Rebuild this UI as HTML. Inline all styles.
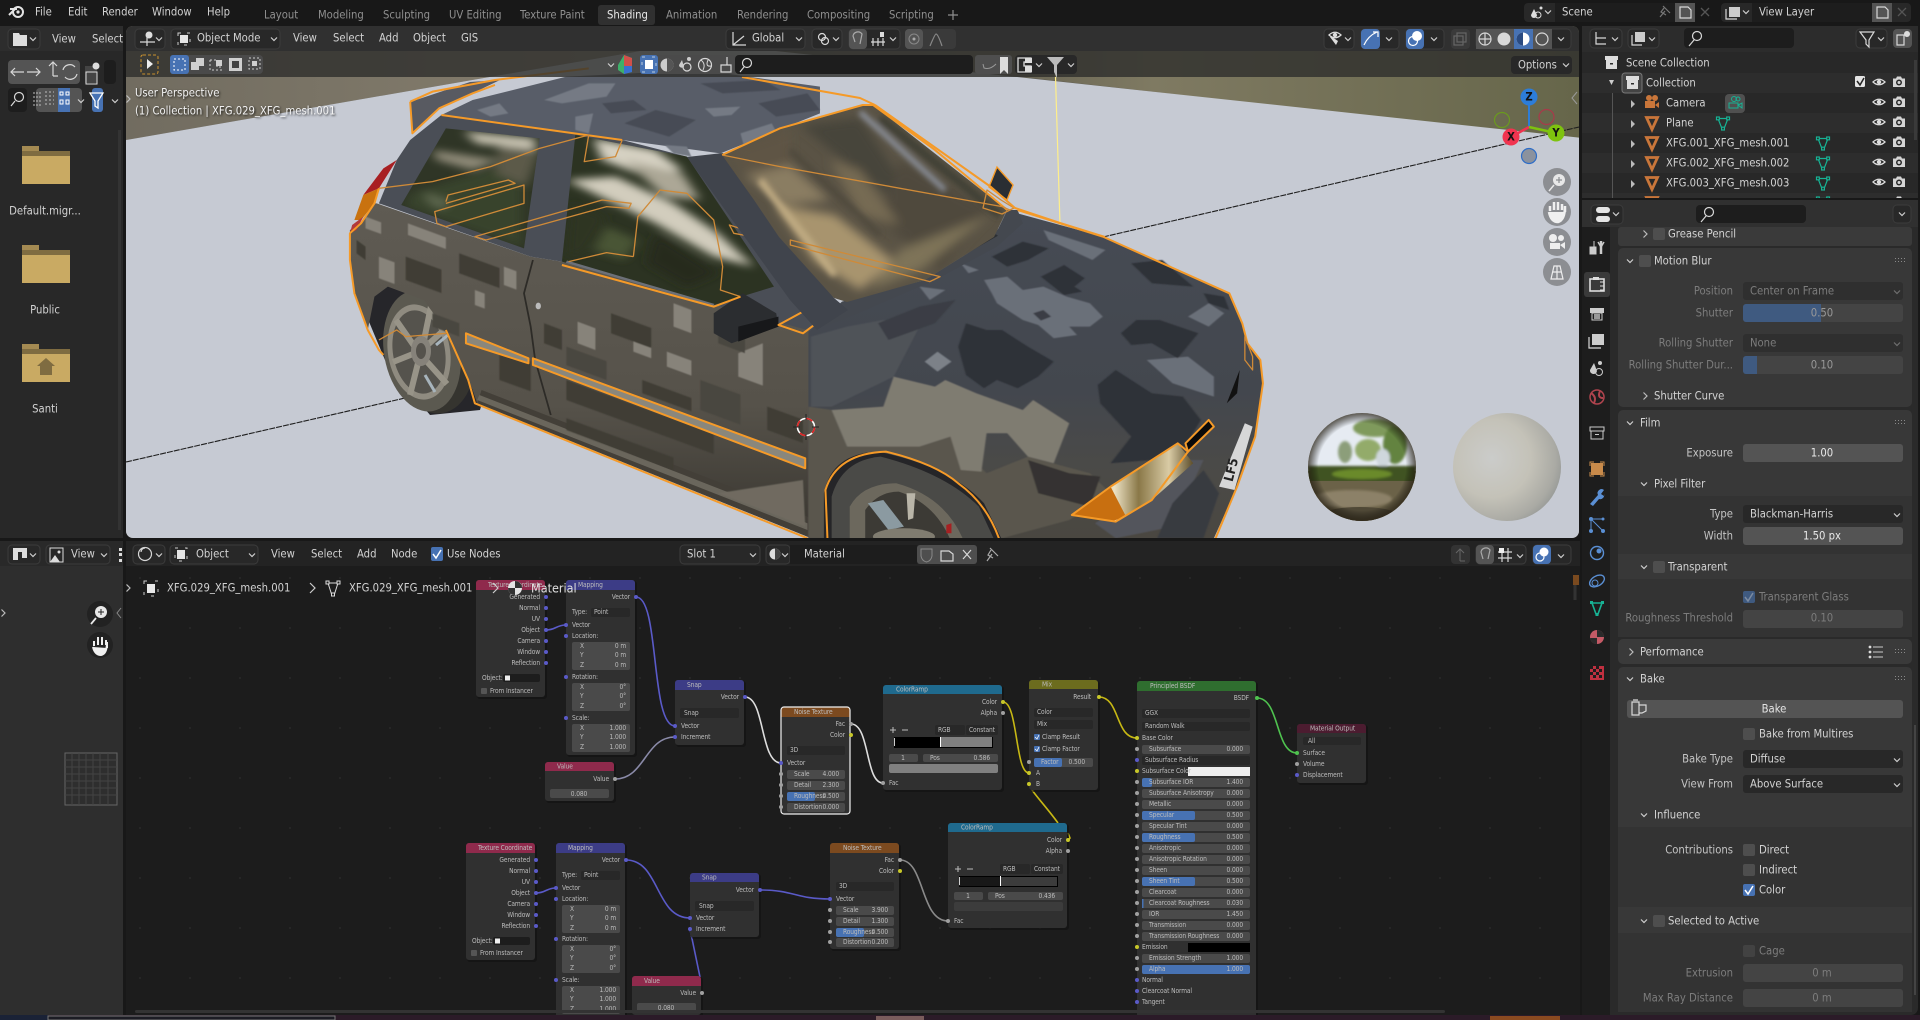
<!DOCTYPE html>
<html><head><meta charset="utf-8"><title>Blender</title>
<style>
html,body{margin:0;padding:0;background:#181818;width:1920px;height:1020px;overflow:hidden}
svg{display:block;position:absolute;left:0;top:0}
text{font-family:"DejaVu Sans Condensed","DejaVu Sans","Liberation Sans",sans-serif;font-stretch:condensed;font-size:11.2px;fill:#d2d2d2;dominant-baseline:central}
.r{text-anchor:end}.m{text-anchor:middle}
.d{fill:#7c7c7c}.l{fill:#c4c4c4}.t{fill:#8f8f8f}
.n text,text.n{font-size:6.6px;fill:#bcbcbc;letter-spacing:-.1px}
.ch{fill:none;stroke:#cfcfcf;stroke-width:1.2}
.b{fill:#282828;stroke:#3c3c3c}
.f{fill:#4a4a4a}.dd{fill:#282828}
.i{fill:none;stroke:#d8d8d8;stroke-width:1.2}
.o{fill:none;stroke:#f59a28;stroke-width:2;vector-effect:non-scaling-stroke;stroke-linejoin:round}
.o1{fill:none;stroke:#cf8a38;stroke-width:1.3;vector-effect:non-scaling-stroke;stroke-linejoin:round}
.lk{fill:none;stroke-width:1.6}
.sh{filter:drop-shadow(1px 1px 1px rgba(0,0,0,.8))}
</style></head><body>
<svg width="1920" height="1020" viewBox="0 0 1920 1020" xmlns="http://www.w3.org/2000/svg">
<defs>
<clipPath id="vp"><rect x="126" y="26" width="1453" height="512" rx="7"/></clipPath>
<clipPath id="ne"><rect x="126" y="541" width="1454" height="474"/></clipPath>
<clipPath id="ol"><rect x="1582" y="26" width="336" height="172"/></clipPath>
<clipPath id="fw"><rect x="0" y="26" width="123" height="40"/></clipPath>
<clipPath id="ws"><polygon points="722,155 780,128 863,105 873,105 1007,210 994,237 925,280 847,302 834,298 779,237 754,200"/></clipPath>
<clipPath id="hs"><circle cx="1362" cy="467" r="54"/></clipPath>
<clipPath id="w1"><polygon points="730,205 940,235 905,565 630,435"/></clipPath>
<clipPath id="w2"><polygon points="1020,225 1270,290 1465,680 1330,735 990,605"/></clipPath>
<filter id="sf" x="-5%" y="-5%" width="110%" height="110%"><feGaussianBlur stdDeviation="1.4"/></filter>
<filter id="bl12" x="-30%" y="-30%" width="160%" height="160%"><feGaussianBlur stdDeviation="12"/></filter>
<filter id="bl5" x="-30%" y="-30%" width="160%" height="160%"><feGaussianBlur stdDeviation="5"/></filter>
<filter id="bl3" x="-30%" y="-30%" width="160%" height="160%"><feGaussianBlur stdDeviation="3"/></filter>
<filter id="bl1" x="-30%" y="-30%" width="160%" height="160%"><feGaussianBlur stdDeviation="1.2"/></filter>
<linearGradient id="gw" x1="0" x2="1" y1="0" y2="0"><stop offset="0" stop-color="#5d5a50"/><stop offset=".37" stop-color="#6a6655"/><stop offset=".52" stop-color="#7f7a62"/><stop offset="1" stop-color="#66664a"/></linearGradient>
<linearGradient id="gl" x1="0" x2="1" y1="0" y2="0"><stop offset="0" stop-color="#716c60"/><stop offset="1" stop-color="#8a8270"/></linearGradient>
<linearGradient id="door" x1="0" x2="0" y1="0" y2="1"><stop offset="0" stop-color="#5f5b53"/><stop offset=".6" stop-color="#56524a"/><stop offset="1" stop-color="#38352f"/></linearGradient>
<linearGradient id="hood" x1="0" x2="0" y1="0" y2="1"><stop offset="0" stop-color="#464b54"/><stop offset=".55" stop-color="#43474e"/><stop offset=".8" stop-color="#4b4a47"/><stop offset="1" stop-color="#4a4741"/></linearGradient>
<linearGradient id="hl" x1="0" x2="1" y1="0" y2="0"><stop offset="0" stop-color="#a58c56"/><stop offset=".35" stop-color="#ece2c4"/><stop offset=".55" stop-color="#8a7848"/><stop offset=".8" stop-color="#d9cba5"/><stop offset="1" stop-color="#5c4d2a"/></linearGradient>
<radialGradient id="ms" cx=".36" cy=".42" r=".72"><stop offset="0" stop-color="#cbccca"/><stop offset=".5" stop-color="#c4c2b8"/><stop offset=".82" stop-color="#aaaaa4"/><stop offset="1" stop-color="#8d9190"/></radialGradient>
<radialGradient id="rim" cx=".5" cy=".5" r=".5"><stop offset=".78" stop-color="#000" stop-opacity="0"/><stop offset="1" stop-color="#2c2414" stop-opacity=".85"/></radialGradient>
<g id="eye"><path d="M-6,0Q0,-5.5 6,0Q0,5.5 -6,0Z" fill="none" stroke="#ddd" stroke-width="1.3"/><circle r="2.2" fill="#ddd"/></g>
<g id="cam"><path d="M-6,-3.5H-3L-2,-5.5H2L3,-3.5H6V5H-6Z" fill="#d5d5d5"/><circle r="3" cy=".5" fill="#2a2a2a"/><circle r="1.5" cy=".5" fill="#d5d5d5"/></g>
<g id="mesh" fill="none" stroke="#17b294" stroke-width="1.2"><path d="M-5,-4.5H5L1.3,5H-1.3Z"/><rect x="-6.5" y="-6" width="2.8" height="2.8" fill="#282828"/><rect x="3.7" y="-6" width="2.8" height="2.8" fill="#282828"/><rect x="-1.4" y="4.2" width="2.8" height="2.8" fill="#282828"/></g>
<path id="obj" d="M-5.5,-5.5H5.5L0,6.5Z" fill="none" stroke="#c9763a" stroke-width="2.8"/>
<path id="cd" d="M-3,-1.5L0,1.5L3,-1.5" fill="none" stroke="#cfcfcf" stroke-width="1.2"/>
<path id="cr" d="M-1.5,-3.5L2,0L-1.5,3.5" fill="none" stroke="#bdbdbd" stroke-width="1.2"/>
<g id="grip" fill="#8a8a8a"><rect x="0" y="0" width="1" height="1"/><rect x="3" y="0" width="1" height="1"/><rect x="6" y="0" width="1" height="1"/><rect x="9" y="0" width="1" height="1"/><rect x="0" y="3" width="1" height="1"/><rect x="3" y="3" width="1" height="1"/><rect x="6" y="3" width="1" height="1"/><rect x="9" y="3" width="1" height="1"/></g>
<pattern id="dots" width="50" height="50" patternUnits="userSpaceOnUse" x="115" y="553"><rect x="24" y="24" width="2" height="2" fill="#262626"/></pattern>
</defs>

<rect width="1920" height="1020" fill="#181818"/>

<!-- TOP BAR -->
<circle cx="18" cy="12" r="5" fill="none" stroke="#e4e4e4" stroke-width="2"/><circle cx="18" cy="12" r="1.6" fill="#e4e4e4"/><path d="M9,15L15,9M10,9H17" stroke="#e4e4e4" stroke-width="2"/>
<text x="35" y="12">File</text><text x="68" y="12">Edit</text><text x="102" y="12">Render</text><text x="152" y="12">Window</text><text x="207" y="12">Help</text>
<rect x="598" y="5" width="57" height="20" rx="3" fill="#303030"/>
<g class="t"><text class="t" x="264" y="15">Layout</text><text class="t" x="318" y="15">Modeling</text><text class="t" x="383" y="15">Sculpting</text><text class="t" x="449" y="15">UV Editing</text><text class="t" x="520" y="15">Texture Paint</text><text x="607" y="15" style="fill:#e8e8e8">Shading</text><text class="t" x="666" y="15">Animation</text><text class="t" x="737" y="15">Rendering</text><text class="t" x="807" y="15">Compositing</text><text class="t" x="889" y="15">Scripting</text></g>
<path d="M953,10V20M948,15H958" stroke="#8f8f8f" stroke-width="1.2"/>
<rect x="1524" y="3" width="151" height="19" rx="4" fill="#282828"/><rect x="1555" y="3" width="120" height="19" fill="#1d1d1d"/>
<path d="M1534,9l-3,6a3,3 0 0 0 6,0z" fill="#ddd"/><circle cx="1538" cy="15" r="3" fill="none" stroke="#ddd"/><circle cx="1541" cy="8" r="1.5" fill="#ddd"/><use href="#cd" x="1548" y="12"/>
<text x="1562" y="12">Scene</text>
<path d="M1660,17L1665,11M1663,6L1670,13M1664,8L1661,12L1666,15" class="i" style="stroke:#777"/>
<rect x="1675" y="3" width="20" height="19" fill="#545454"/><path d="M1680,7H1688L1691,10V18H1680Z" class="i"/>
<path d="M1701,8L1709,16M1709,8L1701,16" stroke="#555" stroke-width="1.3"/>
<rect x="1721" y="3" width="190" height="19" rx="4" fill="#282828"/><rect x="1752" y="3" width="120" height="19" fill="#1d1d1d"/>
<path d="M1729,7H1740V17H1729Z" fill="#ccc"/><path d="M1726,9V19H1737" class="i"/><use href="#cd" x="1746" y="12"/>
<text x="1759" y="12">View Layer</text>
<rect x="1872" y="3" width="20" height="19" fill="#545454"/><path d="M1877,7H1885L1888,10V18H1877Z" class="i"/>
<path d="M1898,8L1906,16M1906,8L1898,16" stroke="#555" stroke-width="1.3"/>

<!-- FILE BROWSER -->
<path d="M6,26H116a7,7 0 0 1 7,7V538H0V32a6,6 0 0 1 6,-6Z" fill="#282828"/>
<rect x="0" y="26" width="123" height="25" fill="#2d2d2d"/>
<rect x="8" y="29" width="32" height="20" rx="4" class="b"/><path d="M13,33H19L20,35H27V46H13Z" fill="#ddd"/><use href="#cd" x="33" y="39"/>
<g clip-path="url(#fw)"><text x="52" y="39">View</text><text x="92" y="39">Select</text></g>
<rect x="8" y="60" width="72" height="24" rx="4" fill="#545454"/><path d="M11,72H24M15,68L11,72L15,76M27,72H40M36,68L40,72L36,76M53,76V62M49,66L53,62L57,66M53,76H58" class="i"/><path d="M63,70a7,7 0 0 1 12,-3M77,74a7,7 0 0 1 -12,3" class="i"/>
<rect x="85" y="66" width="12" height="17" fill="#444"/><rect x="86" y="72" width="11" height="12" fill="none" stroke="#ddd"/><circle cx="96" cy="66" r="3.5" fill="#ddd"/>
<rect x="104" y="60" width="12" height="24" rx="4" fill="#1d1d1d"/>
<rect x="8" y="88" width="19" height="24" rx="4" fill="#1d1d1d"/><circle cx="19" cy="97" r="4.5" class="i"/><path d="M15,101L11,106" class="i"/>
<rect x="36" y="88" width="46" height="24" rx="4" fill="#545454"/><rect x="58" y="88" width="12" height="24" fill="#4772b3"/>
<path d="M34,92V108M37,92V108M40,92V108M45,92H54M45,96H54M45,100H54M45,104H54" stroke="#bbb" stroke-dasharray="2 2" fill="none" transform="translate(0,0)"/>
<path d="M60,92h3v3h-3zM66,92h3v3h-3zM60,100h3v4h-3zM66,100h3v4h-3z" fill="none" stroke="#fff"/>
<use href="#cd" x="81" y="101"/>
<rect x="92" y="88" width="24" height="24" rx="4" fill="#282828"/><rect x="92" y="88" width="11" height="24" rx="3" fill="#4772b3"/>
<path d="M90,93H103L98,101V108L95,106V101Z" fill="none" stroke="#fff" stroke-width="1.3"/><use href="#cd" x="115" y="101"/>
<rect x="118" y="130" width="3" height="400" fill="#333"/>
<path d="M22,146H39V151H70V184H22Z" fill="#c9aa63"/><rect x="22" y="151" width="48" height="5" fill="#7f6c41"/><rect x="22" y="146" width="17" height="5" fill="#a48a52"/>
<text class="m" x="45" y="211">Default.migr...</text>
<path d="M22,245H39V250H70V283H22Z" fill="#c9aa63"/><rect x="22" y="250" width="48" height="5" fill="#7f6c41"/><rect x="22" y="245" width="17" height="5" fill="#a48a52"/>
<text class="m" x="45" y="310">Public</text>
<path d="M22,344H39V349H70V382H22Z" fill="#c9aa63"/><rect x="22" y="349" width="48" height="5" fill="#7f6c41"/><rect x="22" y="344" width="17" height="5" fill="#a48a52"/>
<path d="M46,358L37,366H40V375H52V366H55Z" fill="#7f6c41"/>
<text class="m" x="45" y="409">Santi</text>

<!-- 3D VIEWPORT -->
<g clip-path="url(#vp)">
<rect x="126" y="26" width="1453" height="512" fill="#5b5950"/>
<polygon points="692,26 1579,26 1579,140 1023,77 692,42" fill="url(#gw)"/>
<polygon points="126,26 692,26 692,42 126,140" fill="url(#gl)"/>
<polygon points="126,140 692,42 1579,137.6 1579,538 126,538" fill="#c6cad3"/>

<path d="M126,462L549,365" stroke="#1e1e1e" stroke-width="1.1" stroke-dasharray="6 1"/>
<path d="M1103,237L1579,127" stroke="#1e1e1e" stroke-width="1.1" stroke-dasharray="6 1"/>
<path d="M1055,60L1060,225" stroke="#ffef8a" stroke-width="1.2"/>

<!-- arch base -->
<polygon points="357,293 392,250 450,270 500,340 480,410 430,415 385,360" fill="#26262a"/>
<!-- rear tyre -->
<ellipse cx="432" cy="351" rx="42" ry="63" transform="rotate(-10 432 351)" fill="#35342f"/>
<ellipse cx="422" cy="351" rx="38" ry="61" transform="rotate(-10 422 351)" fill="#5b5950"/>
<ellipse cx="419" cy="352" rx="31" ry="48" transform="rotate(-10 419 352)" fill="#8f8b80"/>
<ellipse cx="419" cy="352" rx="26" ry="42" transform="rotate(-10 419 352)" fill="#55534d"/>
<g stroke="#989488" stroke-width="6"><path d="M423,345L431,306M421,355L447,384M420,355L410,395M417,350L396,320M418,352L393,362M422,350L444,330"/></g>
<path d="M436,345L448,335M425,375L435,392" stroke="#a7b4bc" stroke-width="3"/>
<ellipse cx="421" cy="351" rx="10" ry="15" fill="#86827a"/><ellipse cx="421" cy="351" rx="5" ry="8" fill="#55524c"/>

<!-- spoiler -->
<polygon points="410,102 412,133 439,108 473,93 500,80 470,82" fill="#585a61"/>

<!-- side body -->
<g transform="translate(120,60) scale(.4464,.3333)">
<polygon points="575,430 920,590 990,605 1330,735 1568,810 1568,1440 1540,1430 800,1030 790,990 730,810 680,720 600,680 570,710 555,810 525,700 515,600 515,510 540,490 570,430" fill="url(#door)"/>
<polygon points="800,1030 810,990 1540,1370 1568,1400 1568,1440 1540,1430" fill="#433f38"/>
<polygon points="805,1005 1540,1390 1540,1410 800,1020" fill="#6a665c"/>
<polygon points="580,430 620,300 650,240 720,165 1125,240 1270,290 1568,690 1568,820 1330,735 990,605 920,590" fill="#4a4e56"/>
<!-- camo door -->
<g filter="url(#sf)">
<g fill="#87837a"><polygon points="645,490 730,532 730,567 645,525"/><polygon points="1225,875 1280,902 1280,947 1225,920"/><polygon points="1385,880 1440,850 1440,977 1385,950"/><polygon points="1240,730 1280,750 1280,820 1240,800"/><polygon points="1025,785 1065,805 1065,870 1025,850"/><polygon points="860,620 888,634 888,689 860,675"/><polygon points="795,690 817,701 817,746 795,735"/><polygon points="580,590 615,607 615,672 580,655"/><polygon points="550,470 585,487 585,522 550,505"/><polygon points="1150,840 1190,860 1190,895 1150,875"/></g>
<g fill="#3f3c35"><polygon points="640,590 720,629 720,699 640,660"/><polygon points="760,580 850,624 850,684 760,640"/><polygon points="1000,960 1330,1122 1330,1182 1000,1020"/><polygon points="1000,1075 1240,1193 1240,1230 1000,1110"/><polygon points="1170,960 1280,1014 1280,1054 1170,1000"/><polygon points="850,870 920,904 920,994 850,960"/><polygon points="1100,760 1190,804 1190,864 1100,820"/><polygon points="1450,1040 1530,1079 1530,1149 1450,1110"/><polygon points="530,540 550,560 550,600 530,580"/><polygon points="950,790 990,810 990,870 950,850"/></g>
<g fill="#4a473f"><polygon points="1300,960 1390,1004 1390,1094 1300,1050"/><polygon points="1000,860 1090,904 1090,960 1000,916"/><polygon points="700,760 760,790 760,830 700,800"/><polygon points="1340,800 1400,830 1400,880 1340,850"/></g>
<polygon points="1340,1300 1530,1260 1535,1400 1420,1340" fill="#6f6b60"/>
</g>
<path d="M925,600L905,700L920,800L930,900L965,1065" stroke="#2d2b27" stroke-width="4" fill="none"/>
<ellipse cx="937" cy="738" rx="6" ry="10" fill="#bbb"/>
<!-- door strips -->
<polygon points="775,820 915,895 915,910 775,850" fill="#8a877c"/><polygon points="925,895 1535,1195 1535,1225 925,915" fill="#8a877c"/>
<!-- roof -->
<polygon points="720,165 790,120 1000,50 1300,30 1568,80 1568,160 1345,280 1125,240" fill="#585d68"/>
<g filter="url(#sf)">
<g fill="#757a84"><polygon points="950,120 1050,70 1110,70 1090,110 990,130"/><polygon points="1310,145 1390,140 1370,165 1330,170"/><polygon points="1020,170 1060,160 1050,220 1020,210"/><polygon points="1390,220 1460,190 1480,240 1400,270"/><polygon points="1220,255 1270,260 1280,290 1240,280"/><polygon points="800,150 850,130 870,160 830,170"/></g>
<g fill="#474b55"><polygon points="1130,190 1200,150 1290,180 1230,230"/><polygon points="1300,70 1440,60 1480,90 1350,100"/><polygon points="1080,130 1150,120 1180,150 1100,160"/><polygon points="1430,130 1540,100 1568,150 1470,170"/></g>
</g>
<!-- rear window -->
<polygon points="730,205 940,235 905,565 630,435" fill="#2f3526"/>
<g clip-path="url(#w1)"><g filter="url(#bl12)"><polygon points="770,215 930,235 930,270 800,250" fill="#c9c4b2"/><polygon points="700,270 850,300 790,330 710,300" fill="#8f8a78"/><polygon points="680,395 740,425 720,450 690,425" fill="#b5b1a0"/><polygon points="650,400 900,300 900,560 640,440" fill="#3a4a2c" opacity=".7"/><polygon points="850,260 940,270 910,380 840,340" fill="#5b5a48"/></g></g>
<!-- front window -->
<polygon points="1020,225 1270,290 1465,680 1330,735 990,605" fill="#2c3322"/>
<g clip-path="url(#w2)"><g filter="url(#bl12)"><polygon points="1060,235 1200,270 1260,330 1180,350 1080,300" fill="#d6d1c2"/><polygon points="1000,360 1110,350 1240,430 1340,520 1420,620 1330,590 1200,490" fill="#d2cdbd"/><polygon points="1130,300 1260,340 1300,420 1220,410" fill="#aca796"/><polygon points="1010,430 1090,470 1040,580 1000,590" fill="#2d3524"/><polygon points="1200,520 1340,640 1270,680 1180,610" fill="#262b1c"/><polygon points="1090,500 1160,540 1130,600 1060,570" fill="#4a5436"/></g></g>
<path d="M1000,605L1330,735" stroke="#6c7078" stroke-width="7" fill="none"/>
<!-- side mirror -->
<polygon points="1395,700 1330,760 1330,820 1370,850 1475,800 1470,760" fill="#2b2d30"/>
<polygon points="1385,800 1475,770 1475,800 1385,845" fill="#17181a"/>
<!-- red tail -->
<polygon points="620,300 580,385 545,405 590,325" fill="#a81f22"/><polygon points="545,405 580,385 570,430 540,480 525,480" fill="#c9720f"/><polygon points="520,495 545,470 530,510 515,520" fill="#b23a3a"/>
<!-- outlines -->
<path class="o" d="M650,125L655,220L715,145L790,100L840,75M650,125L700,95L840,60L1050,25"/>
<path class="o" d="M720,165L1125,240"/>
<path class="o1" d="M580,385L700,365L830,320L940,265L1050,225L1040,305L1110,290L1125,240"/>
<path class="o1" d="M730,425L735,405L870,360L885,370L730,430"/>
<path class="o1" d="M705,455L905,375L905,430L730,500L710,490Z"/>
<path class="o1" d="M795,530L1080,420L1145,430L1140,445L1090,440L820,540Z"/>
<path class="o1" d="M1150,590L1160,470L1210,390L1270,400L1330,480L1350,620L1345,690L1390,710"/>
<path class="o1" d="M1005,605L1090,578L1150,590"/>
<path class="o" d="M990,615L1330,740L1390,710"/>
<path class="o" d="M775,820L915,895L915,910L775,850Z"/>
<path class="o" d="M925,895L1535,1195L1535,1225L925,915Z"/>
<path class="o" d="M580,385L570,430L540,490L515,520L515,600L525,700L555,810L580,870L590,885"/>
<path class="o" d="M730,810L780,960L795,1030L1540,1435"/>
<path class="o1" d="M580,840L620,810L640,830L730,820"/>
<path class="o" d="M1475,795L1530,755L1555,795L1530,820Z"/>
<path class="o1" d="M1365,495L1400,510L1415,530L1375,520ZM1490,400L1495,465L1490,465Z"/>
</g>

<!-- hood -->
<g transform="translate(780,60) scale(.5165,.3333)">
<polygon points="55,815 120,755 300,660 460,460 625,530 870,700 895,790 905,850 930,900 935,970 920,1130 885,1280 840,1435 55,1435" fill="url(#hood)"/>
<g filter="url(#sf)">
<polygon points="55,1040 100,1050 130,1160 270,1160 330,1130 400,1240 480,1190 600,1240 640,1300 560,1380 430,1435 55,1435" fill="#5a564d"/>
<polygon points="60,830 130,800 200,780 270,800 220,950 100,1040 60,1040" fill="#4f5258"/>
<polygon points="220,950 300,980 320,960 380,1000 470,1050 490,1020 560,1090 530,1210 480,1190 440,1120 400,1120 390,1235 350,1230 330,1130 270,1160 130,1160 100,1050 200,1040" fill="#7f7b71"/>
<g fill="#6b7079"><polygon points="395,660 440,650 470,690 510,680 555,710 600,730 625,770 600,800 560,800 575,825 530,835 500,795 470,780 420,730 410,700"/><polygon points="510,510 630,570 605,600 520,540"/><polygon points="710,900 790,890 840,950 840,1010 760,970"/><polygon points="790,770 830,730 860,760 830,800"/><polygon points="280,905 305,875 332,905 305,935" style="fill:#7c8188"/><polygon points="350,610 385,630 365,640"/><polygon points="270,680 320,690 290,720"/></g>
<polygon points="490,760 510,750 525,770 505,782" fill="#3a3e45"/>
<g fill="#2f3339"><polygon points="505,650 550,615 590,655 570,680 585,695 550,705"/><polygon points="345,860 360,790 400,810 430,810 480,860 530,905 500,950 460,985 420,960 395,985 360,945 350,890"/><polygon points="660,820 690,780 735,780 810,820 770,895 720,850 680,855"/><polygon points="615,975 650,930 690,970 720,1000 780,1010 815,1080 780,1170 720,1200 640,1210 680,1130 650,1080 620,1030"/><polygon points="410,590 470,545 520,565 480,600 440,620"/><polygon points="680,610 740,600 800,680 720,670"/><polygon points="820,700 860,710 870,750 830,730"/><polygon points="190,790 270,740 340,720 300,790 210,840" style="fill:#3a3e45"/></g>
<polygon points="480,1200 560,1240 620,1250 600,1340 500,1300" fill="#353330"/>
<polygon points="700,1300 780,1200 820,1200 760,1400 650,1435 610,1390" fill="#52555c"/>
<polygon points="760,1330 820,1230 850,1300 820,1435 730,1435" fill="#393b40"/>
</g>
<!-- cowl strip -->
<polygon points="460,450 470,490 420,560 300,660 120,780 60,810 120,725 280,660 415,530 440,450" fill="#44484f"/>
<path d="M190,670L360,545M340,595L420,525" stroke="#2d3034" stroke-width="6" fill="none"/>
<!-- grills -->
<polygon points="865,1030 890,930 885,1000" fill="#111"/>
<polygon points="785,1150 830,1080 840,1100 790,1175" fill="#0a0a0a"/>
<polygon points="850,1280 900,1090 915,1100 880,1290" fill="#d7d7d7"/>
<polygon points="565,1365 640,1280 770,1150 800,1210 720,1320 650,1385" fill="url(#hl)"/>
<polygon points="565,1365 640,1280 670,1370 640,1385" fill="#c86f10"/>
<path class="o" d="M565,1365L640,1280L770,1150L790,1175L720,1320L650,1385Z"/>
<path class="o" d="M785,1150L830,1080L840,1100L790,1175Z"/>
<!-- front wheel -->
<path d="M85,1440V1300Q100,1180 190,1175Q330,1220 395,1330L430,1440Z" fill="#252528"/>
<path d="M100,1440V1310Q120,1200 195,1190Q320,1240 385,1340L415,1440Z" fill="#4a4a47"/>
<path d="M135,1440V1340Q160,1270 225,1270Q320,1310 355,1440Z" fill="#6c685d"/>
<path d="M165,1440V1350Q190,1295 230,1295Q300,1330 330,1440Z" fill="#3c3a35"/>
<polygon points="170,1330 200,1320 240,1400 210,1410" fill="#8b9aa1"/><polygon points="245,1300 262,1300 258,1375 248,1380" fill="#b9b5a8"/><ellipse cx="240" cy="1430" rx="60" ry="25" fill="#807c70"/>
<polygon points="322,1395 332,1390 332,1420 322,1420" fill="#a62022"/>
<path class="o" d="M92,1440L88,1290Q110,1180 205,1175Q300,1210 345,1270Q400,1330 425,1440"/>
<!-- hood outline -->
<path class="o" d="M460,450L625,530L870,700L895,790L905,850L930,900L935,970L920,1130L885,1280L842,1440"/>
<path class="o1" d="M900,830L915,890L915,930L900,900Z"/>
</g>
<text transform="translate(1232,470) rotate(-76)" class="m" style="font-size:13px;font-weight:bold;fill:#222">LF5</text>

<!-- a pillar -->
<polygon points="687,157 723,153 834,298 848,310 817,330 790,300" fill="#40444c"/>
<!-- windshield -->
<polygon points="722,155 780,128 863,105 873,105 1007,210 994,237 925,280 847,302 834,298 779,237 754,200" fill="#5a5345"/>
<g clip-path="url(#ws)">
<g filter="url(#bl5)">
<polygon points="775,205 835,215 895,262 860,290 815,262" fill="#a8946e"/>
<polygon points="745,175 790,165 830,200 785,205" fill="#8a7d62"/>
<polygon points="800,125 860,118 920,210 880,190" fill="#46443a"/>
<polygon points="900,160 990,210 940,270 880,220" fill="#4f493c"/>
<polygon points="900,250 990,215 920,270 870,290" fill="#7e7359"/>
<polygon points="730,150 790,130 790,165 750,175" fill="#5e5545"/>
<polygon points="830,160 860,170 900,225 860,215" fill="#766a52"/>
</g>
<g filter="url(#bl3)"><path d="M860,112L945,190" stroke="#8f95a2" stroke-width="5"/><path d="M880,118L1000,215" stroke="#3f4034" stroke-width="8"/><path d="M790,150L880,235" stroke="#4f4a3c" stroke-width="6"/><path d="M760,180L835,275" stroke="#c2ad84" stroke-width="7"/></g>
</g>
<g transform="translate(780,60) scale(.5165,.3333)">
<path class="o" d="M-112,285L0,205L160,135L180,135L300,270L440,450"/>
<path class="o1" d="M-112,285L0,320L430,440L445,450"/>
<path class="o1" d="M20,540L310,650L290,665L20,555Z"/>
</g>
<path class="o1" d="M983,208L987,190L1001,200L1014,208L1002,214Z"/>
<polygon points="997,167 989,187 1007,200 1013,185" fill="#2a2e33" stroke="#f59a28" stroke-width="1.4"/>
<path d="M875,105L991,187L1015,208L1060,223L1105,237" class="o"/>
<path d="M742,77L860,98L875,105" class="o"/>

<!-- 3d cursor -->
<circle cx="806" cy="427" r="8.5" fill="none" stroke="#fff" stroke-width="1.6"/><circle cx="806" cy="427" r="8.5" fill="none" stroke="#d22" stroke-width="1.6" stroke-dasharray="6.6 6.8"/><path d="M793,427H800M812,427H819M806,414V420M806,434V440" stroke="#222" stroke-width="1"/>

<!-- spheres -->
<circle cx="1362" cy="467" r="54" fill="#5f5842"/>
<g clip-path="url(#hs)">
<rect x="1305" y="413" width="115" height="58" fill="#e6ebf2"/>
<g filter="url(#bl1)"><ellipse cx="1375" cy="428" rx="22" ry="9" fill="#7f9a5c"/><ellipse cx="1395" cy="445" rx="12" ry="19" fill="#64833f"/><ellipse cx="1368" cy="450" rx="13" ry="11" fill="#93ab6a"/><ellipse cx="1345" cy="452" rx="7" ry="11" fill="#8c9e7a"/><ellipse cx="1383" cy="458" rx="7" ry="9" fill="#cfd7dc"/><rect x="1308" y="466" width="108" height="16" fill="#3f5320"/><ellipse cx="1362" cy="474" rx="30" ry="5" fill="#6a8a2c"/></g>
<rect x="1305" y="481" width="115" height="46" fill="#6b6248"/>
<ellipse cx="1352" cy="499" rx="40" ry="9" fill="#8c8168" filter="url(#bl1)"/><ellipse cx="1360" cy="514" rx="35" ry="7" fill="#4f4836"/>
<rect x="1306" y="411" width="112" height="112" fill="url(#rim)"/>
</g>
<circle cx="1507" cy="467" r="54" fill="url(#ms)"/>

<!-- gizmo -->
<path d="M1529,127V97" stroke="#2d7dd8" stroke-width="2"/><path d="M1529,127L1511,137" stroke="#f0334f" stroke-width="2.5"/><path d="M1529,127L1556,133" stroke="#7ec30e" stroke-width="2.5"/>
<circle cx="1502" cy="120" r="7.5" fill="none" stroke="#6a9a1e" stroke-width="1.2"/><circle cx="1546.5" cy="117" r="7.5" fill="none" stroke="#a83a4a" stroke-width="1.2"/><circle cx="1529" cy="156" r="7.5" fill="#8b929e" stroke="#2d6dc8" stroke-width="1.2"/>
<circle cx="1529" cy="97" r="8.5" fill="#2d7dd8"/><circle cx="1511" cy="137" r="8.5" fill="#f0334f"/><circle cx="1556" cy="133" r="8.5" fill="#7ec30e"/>
<text class="m" x="1529" y="97" style="font-weight:bold;fill:#111">Z</text><text class="m" x="1511" y="137" style="font-weight:bold;fill:#111">X</text><text class="m" x="1556" y="133" style="font-weight:bold;fill:#111">Y</text>
<g fill="#8c8e92"><circle cx="1557" cy="182" r="14"/><circle cx="1557" cy="212" r="14"/><circle cx="1557" cy="242" r="14"/><circle cx="1557" cy="272" r="14"/></g>
<circle cx="1559" cy="180" r="6" fill="#e8e8e8"/><path d="M1554,185L1549,191M1559,177V183M1556,180H1562" stroke="#e8e8e8" stroke-width="1.5"/><path d="M1559,177V183M1556,180H1562" stroke="#8c8e92" stroke-width="1.2"/>
<path d="M1550,211V206M1554,210V202M1558,210V202M1562,210V204M1549,212Q1551,222 1558,222Q1565,220 1565,206V212" fill="#f0f0f0" stroke="#f0f0f0" stroke-width="2.5"/>
<circle cx="1553" cy="238" r="4" fill="#eee"/><circle cx="1561" cy="238" r="3" fill="#eee"/><rect x="1550" y="243" width="10" height="6" fill="#eee"/><path d="M1560,245L1565,242V249Z" fill="#eee"/>
<path d="M1551,279L1554,266H1560L1563,279ZM1557,266V279M1552.5,272H1561.5" fill="none" stroke="#eee" stroke-width="1.2"/>

<!-- viewport headers -->
<rect x="126" y="51" width="1453" height="26" fill="#2f2f2d" opacity=".82"/>
<rect x="126" y="26" width="1453" height="25" fill="#303030"/>
</g>
<text x="135" y="93" class="sh" style="fill:#f2f2f2">User Perspective</text>
<text x="135" y="111" class="sh" style="fill:#f2f2f2">(1) Collection | XFG.029_XFG_mesh.001</text>
<use href="#cr" x="128" y="99" transform="translate(0,0)"/>

<!-- vp header row 1 -->
<rect x="135" y="29" width="30" height="20" rx="4" class="b"/><circle cx="149" cy="35" r="3.5" fill="#ddd"/><path d="M140,42H155M147,36V46" class="i"/><use href="#cd" x="159" y="39"/>
<rect x="171" y="29" width="109" height="20" rx="4" class="b"/><rect x="178" y="33" width="12" height="12" fill="none" stroke="#ccc" stroke-dasharray="3 6"/><rect x="180" y="35" width="8" height="8" fill="#e5e5e5"/>
<text x="197" y="38">Object Mode</text><use href="#cd" x="274" y="39"/>
<text x="293" y="38">View</text><text x="333" y="38">Select</text><text x="379" y="38">Add</text><text x="413" y="38">Object</text><text x="461" y="38">GIS</text>
<rect x="726" y="29" width="79" height="20" rx="4" class="b"/><path d="M733,32V45H746M733,45L744,36" class="i"/><text x="752" y="38">Global</text><use href="#cd" x="799" y="39"/>
<rect x="812" y="29" width="30" height="20" rx="4" class="b"/><circle cx="822" cy="37" r="3.5" class="i"/><circle cx="825" cy="41" r="3.5" class="i"/><use href="#cd" x="836" y="39"/>
<rect x="849" y="29" width="51" height="20" rx="4" class="b"/><rect x="849" y="29" width="18" height="20" rx="4" fill="#545454"/><path d="M855,42L853,36a5,5 0 0 1 9,-2L860,44" class="i" style="stroke:#aaa"/><path d="M871,42H885M873,38V46M878,38V46M883,38V46" class="i"/><rect x="880" y="32" width="4" height="5" fill="#ddd"/><use href="#cd" x="893" y="39"/>
<rect x="905" y="29" width="51" height="20" rx="4" fill="#3a3a3a"/><rect x="905" y="29" width="18" height="20" rx="4" fill="#545454"/><circle cx="914" cy="39" r="5" fill="none" stroke="#888"/><circle cx="914" cy="39" r="1.5" fill="#aaa"/><path d="M930,46Q935,34 936,34Q938,34 942,46" class="i" style="stroke:#888"/>

<rect x="1324" y="29" width="30" height="20" rx="4" class="b"/><use href="#eye" x="1335" y="35"/><path d="M1330,37L1336,45L1338,41L1332,37Z" fill="#ddd"/><use href="#cd" x="1348" y="39"/>
<rect x="1361" y="29" width="38" height="20" rx="4" class="b"/><rect x="1361" y="29" width="19" height="20" rx="4" fill="#4772b3"/><path d="M1364,45Q1368,36 1377,32M1373,32H1378V37" class="i" style="stroke:#fff"/><use href="#cd" x="1389" y="39"/>
<rect x="1406" y="29" width="38" height="20" rx="4" class="b"/><rect x="1406" y="29" width="18" height="20" rx="4" fill="#4772b3"/><circle cx="1417" cy="36" r="5" fill="#fff"/><circle cx="1413" cy="41" r="4.5" class="i" style="stroke:#fff"/><use href="#cd" x="1434" y="39"/>
<rect x="1451" y="29" width="19" height="20" rx="4" fill="#3a3a3a"/><rect x="1457" y="33" width="9" height="9" class="i" style="stroke:#666"/><rect x="1454" y="36" width="9" height="9" class="i" style="stroke:#666"/>
<rect x="1476" y="29" width="95" height="20" rx="4" class="b"/><rect x="1476" y="29" width="19" height="20" fill="#545454"/><rect x="1495" y="29" width="19" height="20" fill="#545454"/><rect x="1514" y="29" width="19" height="20" fill="#4772b3"/><rect x="1533" y="29" width="19" height="20" fill="#545454"/>
<circle cx="1485" cy="39" r="6" class="i"/><path d="M1479,39H1491M1485,33V45" class="i"/><circle cx="1504" cy="39" r="6.5" fill="#d8d8d8"/><circle cx="1523" cy="39" r="6.5" fill="#fff"/><path d="M1523,32.5a6.5,6.5 0 0 0 0,13z" fill="#2a4a80"/><circle cx="1542" cy="39" r="6" class="i"/><use href="#cd" x="1561" y="39"/>

<!-- vp header row 2 -->
<rect x="141" y="55" width="17" height="19" rx="2" fill="none" stroke="#c9912f" stroke-dasharray="3 2"/><path d="M147,59V69L153,64Z" fill="#eee"/>
<rect x="170" y="55" width="93" height="19" rx="4" fill="#4a4a4a"/><rect x="170" y="55" width="19" height="19" rx="3" fill="#4772b3"/>
<rect x="174" y="59" width="11" height="11" fill="none" stroke="#fff" stroke-dasharray="2 2"/><path d="M191,70V62H196V58H204V66H199V70Z" fill="#cfcfcf"/><path d="M210,60h7v7h6M210,60v10h13" fill="none" stroke="#cfcfcf" stroke-dasharray="2 2"/><rect x="216" y="60" width="6" height="6" fill="#cfcfcf"/><rect x="229" y="58" width="13" height="13" fill="#cfcfcf"/><rect x="232" y="61" width="7" height="7" fill="#444"/><rect x="249" y="58" width="11" height="11" fill="none" stroke="#cfcfcf" stroke-dasharray="2 2"/><rect x="252" y="61" width="5" height="5" fill="#cfcfcf"/>
<use href="#cd" x="611" y="65"/>
<polygon points="618,65 624,55 632,58 632,72 624,74 618,70" fill="#3eb06a"/><polygon points="624,55 632,58 632,66 624,66" fill="#d0504a"/><polygon points="624,66 632,66 632,72 624,74" fill="#3a70d0"/>
<rect x="640" y="55" width="96" height="19" rx="3" fill="#4a4a4a"/><rect x="640" y="55" width="18" height="19" rx="3" fill="#4772b3"/><rect x="645" y="60" width="8" height="9" fill="#fff"/><rect x="642" y="57" width="14" height="15" fill="none" stroke="#bcd" stroke-dasharray="3 7"/>
<circle cx="667" cy="65" r="6.5" fill="#ccc"/><path d="M667,58.5a6.5,6.5 0 0 1 0,13z" fill="#555"/><circle cx="687" cy="67" r="4" class="i"/><path d="M682,60l-3,5a3,3 0 0 0 5,2z" fill="#ccc"/><circle cx="689" cy="59" r="2" fill="#ccc"/><circle cx="705" cy="65" r="6.5" class="i"/><path d="M701,60Q706,64 703,70M708,60Q705,67 711,66" class="i" style="stroke-width:1"/><path d="M727,57V65M723,65H731V72H721V65Z" class="i"/>
<rect x="735" y="55" width="238" height="19" rx="4" fill="#1d1d1d"/><circle cx="747" cy="63" r="4.5" class="i"/><path d="M744,67L740,72" class="i"/>
<rect x="975" y="55" width="37" height="19" rx="3" fill="#4e4e4e"/><path d="M983,64Q984,68 984,68Q990,70 996,64" fill="none" stroke="#999"/><path d="M1000,57H1008V74L1004,70L1000,74Z" fill="#ddd"/>
<rect x="1015" y="55" width="62" height="19" rx="4" fill="#282828"/><path d="M1018,58V72H1031V66H1024V62H1031V58Z" fill="none" stroke="#ddd" stroke-width="1.3"/><rect x="1025" y="58" width="7" height="5" fill="#ddd"/><rect x="1025" y="66" width="7" height="6" fill="#ddd"/><use href="#cd" x="1039" y="65"/>
<path d="M1047,57H1064L1057,65V78L1054,72V65Z" fill="#bbb"/><use href="#cd" x="1071" y="65"/>
<rect x="1511" y="56" width="61" height="18" rx="4" fill="#282828"/><text x="1518" y="65">Options</text><use href="#cd" x="1566" y="65"/>
<path d="M1577,92L1572,98L1577,104" fill="none" stroke="#999"/>

<!-- OUTLINER -->
<path d="M1590,26H1911a7,7 0 0 1 7,7V198H1582V33a7,7 0 0 1 8,-7Z" fill="#282828"/>
<rect x="1582" y="26" width="336" height="26" fill="#2c2c2c"/>
<rect x="1590" y="29" width="32" height="19" rx="4" class="b"/><path d="M1596,32V44H1606M1596,38H1606" class="i"/><use href="#cd" x="1615" y="39"/>
<rect x="1628" y="29" width="31" height="19" rx="4" class="b"/><rect x="1635" y="32" width="10" height="10" fill="#ccc"/><path d="M1632,35V45H1642" class="i"/><use href="#cd" x="1652" y="39"/>
<rect x="1684" y="28" width="110" height="20" rx="4" fill="#1d1d1d"/><circle cx="1697" cy="36" r="4.5" class="i"/><path d="M1694,40L1689,46" class="i"/>
<rect x="1856" y="29" width="31" height="19" rx="4" class="b"/><path d="M1860,32H1874L1869,40V47L1866,44V40Z" class="i"/><use href="#cd" x="1881" y="39"/>
<rect x="1893" y="29" width="19" height="19" rx="4" fill="#545454"/><path d="M1897,35H1904V45H1897Z" class="i"/><circle cx="1907" cy="34" r="3" fill="#ddd"/>
<g clip-path="url(#ol)">
<rect x="1582" y="73" width="336" height="20" fill="#2d2d2d"/><rect x="1582" y="113" width="336" height="20" fill="#2d2d2d"/><rect x="1582" y="153" width="336" height="20" fill="#2d2d2d"/><rect x="1582" y="193" width="336" height="20" fill="#2d2d2d"/>
<rect x="1605" y="56" width="13" height="4" fill="#ddd"/><path d="M1606,60H1617V69H1606Z" fill="#ddd"/><rect x="1610" y="63" width="3" height="1.5" fill="#2a2a2a"/>
<text x="1626" y="63">Scene Collection</text>
<path d="M1609,80H1614L1611.5,85Z" fill="#ccc"/>
<rect x="1622" y="73" width="20" height="20" rx="3" fill="#444" stroke="#777"/><rect x="1626" y="76" width="13" height="4" fill="#ddd"/><path d="M1627,80H1638V89H1627Z" fill="#ddd"/><rect x="1631" y="83" width="3" height="1.5" fill="#2a2a2a"/>
<text x="1646" y="83">Collection</text>
<rect x="1855" y="76" width="10" height="11" rx="1.5" fill="#e4e4e4"/><path d="M1857,81L1860,85L1864,78" fill="none" stroke="#222" stroke-width="1.5"/>
<path d="M1631,100V108L1635,104Z" fill="#bbb"/><path d="M1631,120V128L1635,124Z" fill="#bbb"/><path d="M1631,140V148L1635,144Z" fill="#bbb"/><path d="M1631,160V168L1635,164Z" fill="#bbb"/><path d="M1631,180V188L1635,184Z" fill="#bbb"/>
<rect x="1612" y="93" width="1" height="105" fill="#555"/>
<circle cx="1649" cy="98" r="3" fill="#c9763a"/><circle cx="1655" cy="98" r="3" fill="#c9763a"/><rect x="1645" y="101" width="10" height="7" fill="#c9763a"/><path d="M1655,105L1659,102V108Z" fill="#c9763a"/>
<text x="1666" y="103">Camera</text>
<rect x="1725" y="94" width="20" height="19" rx="4" fill="#505050"/><circle cx="1734" cy="99" r="2.5" fill="none" stroke="#17b294"/><circle cx="1738" cy="99" r="2" fill="none" stroke="#17b294"/><rect x="1729" y="103" width="9" height="5" fill="none" stroke="#17b294"/><path d="M1738,105L1742,103V108Z" fill="none" stroke="#17b294"/>
<use href="#obj" x="1652" y="123"/><text x="1666" y="123">Plane</text><use href="#mesh" x="1723" y="123"/>
<use href="#obj" x="1652" y="143"/><text x="1666" y="143">XFG.001_XFG_mesh.001</text><use href="#mesh" x="1823" y="143"/>
<use href="#obj" x="1652" y="163"/><text x="1666" y="163">XFG.002_XFG_mesh.002</text><use href="#mesh" x="1823" y="163"/>
<use href="#obj" x="1652" y="183"/><text x="1666" y="183">XFG.003_XFG_mesh.003</text><use href="#mesh" x="1823" y="183"/>
<use href="#obj" x="1652" y="203"/><use href="#mesh" x="1823" y="203"/>
<use href="#eye" x="1879" y="82"/><use href="#cam" x="1899" y="82"/>
<use href="#eye" x="1879" y="102"/><use href="#cam" x="1899" y="102"/>
<use href="#eye" x="1879" y="122"/><use href="#cam" x="1899" y="122"/>
<use href="#eye" x="1879" y="142"/><use href="#cam" x="1899" y="142"/>
<use href="#eye" x="1879" y="162"/><use href="#cam" x="1899" y="162"/>
<use href="#eye" x="1879" y="182"/><use href="#cam" x="1899" y="182"/>
<use href="#eye" x="1879" y="202"/><use href="#cam" x="1899" y="202"/>
<rect x="1914" y="60" width="3" height="80" fill="#3a3a3a"/>
</g>

<!-- PROPERTIES -->
<path d="M1590,200H1910a8,8 0 0 1 8,8V1008a7,7 0 0 1 -7,7H1582V208a8,8 0 0 1 8,-8Z" fill="#2a2a2a"/>
<rect x="1582" y="200" width="336" height="27" fill="#303030"/>
<rect x="1582" y="227" width="28" height="788" fill="#1d1d1d"/>
<rect x="1591" y="205" width="32" height="19" rx="4" class="b"/><rect x="1596" y="207" width="14" height="6" rx="3" fill="#e4e4e4"/><rect x="1596" y="216" width="14" height="6" rx="3" fill="#e4e4e4"/><use href="#cd" x="1616" y="214"/>
<rect x="1696" y="205" width="110" height="18" rx="4" fill="#1d1d1d"/><circle cx="1709" cy="212" r="4.5" class="i"/><path d="M1706,216L1701,222" class="i"/>
<rect x="1893" y="205" width="18" height="18" rx="4" class="b"/><use href="#cd" x="1902" y="214"/>
<!-- tabs -->
<rect x="1584" y="272" width="26" height="25" rx="3" fill="#3a3a3a"/>
<path d="M1594,241V254M1590,247H1596V254H1590Z" fill="#ccc" stroke="#ccc"/><path d="M1601,241V254" stroke="#ccc" stroke-width="2.5"/><path d="M1598,242L1601,247L1604,242" fill="none" stroke="#ccc" stroke-width="1.5"/>
<rect x="1590" y="279" width="14" height="12" fill="none" stroke="#ddd" stroke-width="1.6"/><rect x="1593" y="277" width="6" height="3" fill="#ddd"/><path d="M1600,282H1604M1600,286H1604M1600,290H1604" stroke="#ddd"/>
<rect x="1590" y="308" width="14" height="5" fill="#ccc"/><path d="M1592,313H1602V320H1592Z" fill="none" stroke="#ccc"/><rect x="1594" y="314" width="6" height="5" fill="#999"/>
<rect x="1592" y="334" width="12" height="11" fill="#ccc"/><path d="M1589,337V348H1601" class="i"/>
<path d="M1594,363l-4,7a3.5,3.5 0 0 0 7,1z" fill="#ccc"/><circle cx="1599" cy="372" r="3.5" fill="none" stroke="#ccc"/><circle cx="1600" cy="363" r="2" fill="#ccc"/>
<circle cx="1597" cy="397" r="7" fill="none" stroke="#b0444e" stroke-width="1.5"/><path d="M1591,393Q1597,397 1594,403M1600,391Q1597,398 1603,398" fill="none" stroke="#b0444e" stroke-width="2"/>
<rect x="1590" y="427" width="14" height="4" fill="none" stroke="#ccc"/><path d="M1591,431H1603V439H1591Z" fill="none" stroke="#ccc"/><rect x="1595" y="434" width="4" height="1" fill="#ccc"/>
<rect x="1591" y="463" width="12" height="12" fill="#c88a4a"/><path d="M1590,466V462H1594M1600,462H1604V466M1604,472V476H1600M1594,476H1590V472" fill="none" stroke="#c88a4a"/>
<path d="M1590,504L1598,495A4,4 0 0 1 1604,490L1601,494L1604,496L1604,494A4,4 0 0 1 1599,499L1593,506Z" fill="#5a8fd4"/>
<circle cx="1591" cy="519" r="2" fill="#5a8fd4"/><circle cx="1603" cy="519" r="1.5" fill="#5a8fd4"/><circle cx="1591" cy="531" r="2" fill="#5a8fd4"/><circle cx="1603" cy="531" r="2" fill="#5a8fd4"/><path d="M1591,519H1603M1591,519V531M1591,519L1603,531" stroke="#5a8fd4"/>
<circle cx="1597" cy="553" r="6.5" fill="none" stroke="#5a8fd4" stroke-width="1.4"/><circle cx="1599" cy="551" r="2.5" fill="#5a8fd4"/>
<ellipse cx="1597" cy="581" rx="8" ry="5" transform="rotate(-30 1597 581)" fill="none" stroke="#5a8fd4" stroke-width="1.4"/><circle cx="1595" cy="583" r="3" fill="none" stroke="#5a8fd4"/>
<path d="M1592,603H1602L1598,614H1596Z" fill="none" stroke="#17b294" stroke-width="1.6"/><rect x="1590" y="601" width="3" height="3" fill="#17b294"/><rect x="1601" y="601" width="3" height="3" fill="#17b294"/><rect x="1595.5" y="613" width="3" height="3" fill="#17b294"/>
<circle cx="1597" cy="637" r="7" fill="#c55a66"/><path d="M1590,638H1597V644A7,7 0 0 1 1590,638Z" fill="#2a2a2a"/><path d="M1597,630A7,7 0 0 1 1604,637H1597Z" fill="#2a2a2a"/>
<rect x="1590" y="666" width="14" height="14" fill="#c03040"/><path d="M1590,666h3v3h-3zM1596,666h3v3h-3zM1593,669h3v3h-3zM1599,669h3v3h-3zM1590,672h3v3h-3zM1596,672h3v3h-3zM1593,675h3v3h-3zM1599,675h3v3h-3z" fill="#1d1d1d"/>

<!-- panels -->
<rect x="1618" y="227" width="294" height="19" rx="3" fill="#3a3a3a"/>
<rect x="1618" y="248" width="294" height="159" rx="5" fill="#383838"/>
<path d="M1623,410H1907a5,5 0 0 1 5,5V637H1618V415a5,5 0 0 1 5,-5Z" fill="#383838"/>
<rect x="1618" y="639" width="294" height="25" rx="5" fill="#3a3a3a"/>
<path d="M1623,667H1907a5,5 0 0 1 5,5V1012H1618V672a5,5 0 0 1 5,-5Z" fill="#383838"/>
<rect x="1618" y="496" width="294" height="58" fill="#333"/><rect x="1618" y="579" width="294" height="58" fill="#333"/>
<rect x="1618" y="827" width="294" height="80" fill="#333"/><rect x="1618" y="933" width="294" height="79" fill="#333"/>
<rect x="1914" y="725" width="2" height="270" fill="#444"/>

<use href="#cr" x="1645" y="234"/><rect x="1653" y="228" width="12" height="12" rx="2" fill="#4e4e4e"/><text x="1668" y="234">Grease Pencil</text>
<use href="#cd" x="1630" y="261"/><rect x="1639" y="255" width="12" height="12" rx="2" fill="#4e4e4e"/><text x="1654" y="261">Motion Blur</text><use href="#grip" x="1895" y="258"/>
<text class="r d" x="1733" y="291">Position</text><rect x="1743" y="282" width="160" height="18" rx="3" class="dd" style="fill:#2f2f2f"/><text x="1750" y="291" class="d">Center on Frame</text><use href="#cd" x="1897" y="292" opacity=".4"/>
<text class="r d" x="1733" y="313">Shutter</text><rect x="1743" y="304" width="160" height="18" rx="3" fill="#444"/><path d="M1746,304H1821V322H1746a3,3 0 0 1 -3,-3V307a3,3 0 0 1 3,-3Z" fill="#3f5a80"/><text class="m d" x="1822" y="313" style="fill:#999">0.50</text>
<text class="r d" x="1733" y="343">Rolling Shutter</text><rect x="1743" y="334" width="160" height="18" rx="3" fill="#2f2f2f"/><text x="1750" y="343" class="d">None</text><use href="#cd" x="1897" y="344" opacity=".4"/>
<text class="r d" x="1733" y="365">Rolling Shutter Dur...</text><rect x="1743" y="356" width="160" height="18" rx="3" fill="#444"/><path d="M1746,356H1757V374H1746a3,3 0 0 1 -3,-3V359a3,3 0 0 1 3,-3Z" fill="#3f5a80"/><text class="m d" x="1822" y="365" style="fill:#999">0.10</text>
<use href="#cr" x="1645" y="396"/><text x="1654" y="396">Shutter Curve</text>
<use href="#cd" x="1630" y="423"/><text x="1640" y="423">Film</text><use href="#grip" x="1895" y="420"/>
<text class="r l" x="1733" y="453">Exposure</text><rect x="1743" y="444" width="160" height="18" rx="3" fill="#545454"/><text class="m" x="1822" y="453" style="fill:#e8e8e8">1.00</text>
<use href="#cd" x="1644" y="484"/><text x="1654" y="484">Pixel Filter</text>
<text class="r l" x="1733" y="514">Type</text><rect x="1743" y="505" width="160" height="18" rx="3" fill="#282828"/><text x="1750" y="514">Blackman-Harris</text><use href="#cd" x="1897" y="515"/>
<text class="r l" x="1733" y="536">Width</text><rect x="1743" y="527" width="160" height="18" rx="3" fill="#545454"/><text class="m" x="1822" y="536" style="fill:#e8e8e8">1.50 px</text>
<use href="#cd" x="1644" y="567"/><rect x="1653" y="561" width="12" height="12" rx="2" fill="#4e4e4e"/><text x="1668" y="567">Transparent</text>
<rect x="1743" y="591" width="12" height="12" rx="2" fill="#3f5a80"/><path d="M1745,597L1748,601L1753,593" fill="none" stroke="#7c8ba0" stroke-width="1.5"/><text x="1759" y="597" class="d">Transparent Glass</text>
<text class="r d" x="1733" y="618">Roughness Threshold</text><rect x="1743" y="610" width="160" height="18" rx="3" fill="#444"/><text class="m d" x="1822" y="618">0.10</text>
<use href="#cr" x="1631" y="652"/><text x="1640" y="652">Performance</text><path d="M1873,647H1883M1873,652H1883M1873,657H1883" stroke="#ccc"/><circle cx="1870" cy="647" r="1.4" fill="#ddd"/><circle cx="1870" cy="652" r="1.4" fill="#ddd"/><circle cx="1870" cy="657" r="1.4" fill="#ddd"/><use href="#grip" x="1895" y="649"/>
<use href="#cd" x="1630" y="679"/><text x="1640" y="679">Bake</text><use href="#grip" x="1895" y="676"/>
<rect x="1627" y="700" width="276" height="18" rx="3" fill="#545454"/><path d="M1632,702H1639V715H1632ZM1633,700H1638M1639,705H1646V711L1642,713H1639" class="i"/><text class="m" x="1774" y="709" style="fill:#e4e4e4">Bake</text>
<rect x="1743" y="728" width="12" height="12" rx="2" fill="#4e4e4e"/><text x="1759" y="734">Bake from Multires</text>
<text class="r l" x="1733" y="759">Bake Type</text><rect x="1743" y="750" width="160" height="18" rx="3" fill="#282828"/><text x="1750" y="759">Diffuse</text><use href="#cd" x="1897" y="760"/>
<text class="r l" x="1733" y="784">View From</text><rect x="1743" y="775" width="160" height="18" rx="3" fill="#282828"/><text x="1750" y="784">Above Surface</text><use href="#cd" x="1897" y="785"/>
<use href="#cd" x="1644" y="815"/><text x="1654" y="815">Influence</text>
<text class="r l" x="1733" y="850">Contributions</text><rect x="1743" y="844" width="12" height="12" rx="2" fill="#4e4e4e"/><text x="1759" y="850">Direct</text>
<rect x="1743" y="864" width="12" height="12" rx="2" fill="#4e4e4e"/><text x="1759" y="870">Indirect</text>
<rect x="1743" y="884" width="12" height="12" rx="2" fill="#4772b3"/><path d="M1745,890L1748,894L1753,886" fill="none" stroke="#fff" stroke-width="1.5"/><text x="1759" y="890">Color</text>
<use href="#cd" x="1644" y="921"/><rect x="1653" y="915" width="12" height="12" rx="2" fill="#4e4e4e"/><text x="1668" y="921">Selected to Active</text>
<rect x="1743" y="945" width="12" height="12" rx="2" fill="#424242"/><text x="1759" y="951" class="d">Cage</text>
<text class="r d" x="1733" y="973">Extrusion</text><rect x="1743" y="964" width="160" height="18" rx="3" fill="#444"/><text class="m d" x="1822" y="973">0 m</text>
<text class="r d" x="1733" y="998">Max Ray Distance</text><rect x="1743" y="989" width="160" height="18" rx="3" fill="#444"/><text class="m d" x="1822" y="998">0 m</text>

<!-- LOWER LEFT -->
<path d="M7,541H123V1015H0V548a7,7 0 0 1 7,-7Z" fill="#2e2e2e"/>
<rect x="0" y="541" width="123" height="25" fill="#292929"/>
<rect x="8" y="545" width="32" height="19" rx="4" class="b"/><path d="M13,548H27V558H22V552H18V560H13Z" fill="#ddd"/><use href="#cd" x="33" y="555"/>
<rect x="46" y="545" width="64" height="19" rx="4" class="b"/><rect x="50" y="548" width="13" height="14" fill="none" stroke="#ddd"/><path d="M50,562L55,555L60,562Z" fill="#ddd"/><circle cx="59" cy="552" r="1.5" fill="#ddd"/><text x="71" y="554">View</text><use href="#cd" x="104" y="555"/>
<rect x="119" y="548" width="3" height="3" fill="#ddd"/><rect x="119" y="553" width="3" height="3" fill="#ddd"/><rect x="119" y="559" width="3" height="3" fill="#ddd"/>
<use href="#cr" x="3" y="613"/>
<circle cx="100" cy="614" r="13" fill="#222"/><circle cx="101" cy="612" r="6" fill="#e8e8e8"/><path d="M96,618L91,624" stroke="#e8e8e8" stroke-width="1.8"/><path d="M101,609V615M98,612H104" stroke="#222"/>
<circle cx="100" cy="645" r="13" fill="#222"/><path d="M94,646V641M98,645V637M102,645V637M106,645V640M93,647Q95,655 101,655Q107,654 107,642V648" fill="#f0f0f0" stroke="#f0f0f0" stroke-width="2"/>
<path d="M121,608L117,613L121,618" fill="none" stroke="#888"/>
<g fill="none" stroke="#444"><rect x="65" y="753" width="52" height="52" stroke="#666"/><path d="M65,760H117M65,767H117M65,774H117M65,781H117M65,788H117M65,795H117M72,753V805M79,753V805M86,753V805M93,753V805M100,753V805M108,753V805"/></g>

<!-- NODE EDITOR -->
<rect x="126" y="541" width="1454" height="474" fill="#1c1c1c"/>
<rect x="126" y="566" width="1454" height="449" fill="url(#dots)"/>
<rect x="126" y="541" width="1454" height="25" fill="#232323"/>
<rect x="133" y="545" width="32" height="19" rx="4" class="b"/><circle cx="145" cy="554" r="6.5" class="i"/><path d="M141,552a4,4 0 0 1 4,-4" class="i"/><use href="#cd" x="159" y="555"/>
<rect x="170" y="545" width="88" height="19" rx="4" class="b"/><rect x="175" y="548" width="12" height="13" fill="none" stroke="#ccc" stroke-dasharray="3 7"/><rect x="177" y="550" width="8" height="9" fill="#e5e5e5"/><text x="196" y="554">Object</text><use href="#cd" x="252" y="555"/>
<text x="271" y="554">View</text><text x="311" y="554">Select</text><text x="357" y="554">Add</text><text x="391" y="554">Node</text>
<rect x="431" y="547" width="12" height="14" rx="2" fill="#4772b3"/><path d="M433,554L436,558L441,550" fill="none" stroke="#fff" stroke-width="1.5"/><text x="447" y="554">Use Nodes</text>
<rect x="680" y="545" width="80" height="19" rx="4" class="b"/><text x="687" y="554">Slot 1</text><use href="#cd" x="753" y="555"/>
<rect x="766" y="545" width="24" height="19" rx="4" class="b"/><circle cx="775" cy="554" r="5.5" fill="#ddd"/><path d="M775,548.5a5.5,5.5 0 0 1 0,11z" fill="#444"/><use href="#cd" x="785" y="555"/>
<rect x="790" y="545" width="127" height="19" fill="#1d1d1d"/><text x="804" y="554">Material</text>
<rect x="917" y="545" width="60" height="19" rx="3" fill="#4e4e4e"/><path d="M921,549H932V556Q931,561 926.5,562Q922,561 921,556Z" fill="none" stroke="#888"/><path d="M941,551H949L953,554V561H941Z" class="i"/><path d="M963,550L971,559M971,550L963,559" class="i"/>
<path d="M987,561L992,554M990,548L998,556M991,550L988,555L993,558" class="i" style="stroke:#aaa"/>
<rect x="1451" y="545" width="19" height="19" rx="4" fill="#333"/><path d="M1460,561V549M1456,553L1460,549L1464,553M1460,561H1465" fill="none" stroke="#666"/>
<rect x="1476" y="545" width="50" height="19" rx="4" class="b"/><rect x="1476" y="545" width="18" height="19" rx="4" fill="#545454"/><path d="M1483,559L1481,552a5,5 0 0 1 9,-2L1488,559" class="i" style="stroke:#aaa"/><path d="M1498,552H1512M1498,558H1512M1502,548V562M1508,548V562" class="i"/><rect x="1499" y="548" width="5" height="5" fill="#eee"/><use href="#cd" x="1520" y="556"/>
<rect x="1533" y="545" width="38" height="19" rx="4" class="b"/><rect x="1533" y="545" width="18" height="19" rx="4" fill="#4772b3"/><circle cx="1544" cy="552" r="4.5" fill="#fff"/><circle cx="1540" cy="557" r="4" class="i" style="stroke:#fff"/><use href="#cd" x="1561" y="556"/>
<rect x="1573" y="575" width="6" height="10" fill="#7a4a1f"/>

<g clip-path="url(#ne)">
<!-- links -->
<g class="lk">
<path class="lk" stroke="#5a5ac8" d="M546,630C556,630 556,625 566,625"/>
<path class="lk" stroke="#5a5ac8" d="M636,597C660,597 650,726 675,726"/>
<path class="lk" stroke="#8a8aa8" d="M615,779C645,779 645,737 675,737"/>
<path class="lk" stroke="#ddd" d="M745,697C765,697 760,763 781,763"/>
<path class="lk" stroke="#ddd" d="M851,724C870,724 865,783 883,783"/>
<path class="lk" stroke="#c7b814" d="M1003,702C1018,702 1015,773 1029,773"/>
<path class="lk" stroke="#c7b814" d="M1029,784C1030,790 1045,805 1058,823"/>
<path class="lk" stroke="#c7b814" d="M1068,840L1070,838L1068,833"/>
<path class="lk" stroke="#c7b814" d="M1099,697C1120,697 1115,738 1137,738"/>
<path class="lk" stroke="#4fc24f" d="M1257,698C1280,698 1275,753 1297,753"/>
<path class="lk" stroke="#5a5ac8" d="M536,893C546,893 546,888 556,888"/>
<path class="lk" stroke="#5a5ac8" d="M626,860C660,860 655,918 690,918"/>
<path class="lk" stroke="#5a5ac8" d="M760,890C795,890 795,899 830,899"/>
<path class="lk" stroke="#8a8a8a" d="M900,860C925,860 920,921 948,921"/>
<path class="lk" stroke="#5a5ac8" d="M690,929L700,977"/>
</g>

<!-- TexCoord top -->
<g class="n" transform="translate(476,580)">
<rect x="1" y="1" width="70" height="118" rx="3" fill="#111" opacity=".6"/><rect width="69" height="117" rx="3" fill="#303030"/><path d="M0,10V3a3,3 0 0 1 3,-3H66a3,3 0 0 1 3,3V10Z" fill="#8f2a4c"/>
<text x="12" y="5">Texture Coordinate</text>
<text class="r" x="64" y="17">Generated</text><text class="r" x="64" y="28">Normal</text><text class="r" x="64" y="39">UV</text><text class="r" x="64" y="50">Object</text><text class="r" x="64" y="61">Camera</text><text class="r" x="64" y="72">Window</text><text class="r" x="64" y="83">Reflection</text>
<g fill="#5a5ac8"><circle cx="70" cy="17" r="2"/><circle cx="70" cy="28" r="2"/><circle cx="70" cy="39" r="2"/><circle cx="70" cy="50" r="2"/><circle cx="70" cy="61" r="2"/><circle cx="70" cy="72" r="2"/><circle cx="70" cy="83" r="2"/></g>
<text x="6" y="98">Object:</text><rect x="27" y="94" width="37" height="8" rx="2" fill="#1d1d1d"/><rect x="29" y="95.5" width="5" height="5" fill="#eee"/><rect x="5" y="108" width="6" height="6" rx="1" fill="#555"/><text x="14" y="111">From Instancer</text>
</g>
<!-- Mapping top -->
<g class="n" transform="translate(566,580)">
<rect x="1" y="1" width="70" height="176" rx="3" fill="#111" opacity=".6"/><rect width="69" height="175" rx="3" fill="#303030"/><path d="M0,10V3a3,3 0 0 1 3,-3H66a3,3 0 0 1 3,3V10Z" fill="#3c3c86"/>
<text x="12" y="5">Mapping</text><text class="r" x="64" y="17">Vector</text><circle cx="70" cy="17" r="2" fill="#5a5ac8"/>
<text x="6" y="32">Type:</text><rect x="25" y="28" width="39" height="9" rx="2" fill="#282828"/><text x="28" y="32">Point</text>
<circle cx="0" cy="45" r="2" fill="#5a5ac8"/><text x="6" y="45">Vector</text><circle cx="0" cy="56" r="2" fill="#5a5ac8"/><text x="6" y="56">Location:</text>
<rect x="6" y="62" width="58" height="28" rx="2" fill="#4a4a4a"/><text x="14" y="66">X</text><text x="14" y="75">Y</text><text x="14" y="85">Z</text><text class="r" x="60" y="66">0 m</text><text class="r" x="60" y="75">0 m</text><text class="r" x="60" y="85">0 m</text>
<circle cx="0" cy="97" r="2" fill="#5a5ac8"/><text x="6" y="97">Rotation:</text>
<rect x="6" y="103" width="58" height="28" rx="2" fill="#4a4a4a"/><text x="14" y="107">X</text><text x="14" y="116">Y</text><text x="14" y="126">Z</text><text class="r" x="60" y="107">0°</text><text class="r" x="60" y="116">0°</text><text class="r" x="60" y="126">0°</text>
<circle cx="0" cy="138" r="2" fill="#5a5ac8"/><text x="6" y="138">Scale:</text>
<rect x="6" y="144" width="58" height="28" rx="2" fill="#4a4a4a"/><text x="14" y="148">X</text><text x="14" y="157">Y</text><text x="14" y="167">Z</text><text class="r" x="60" y="148">1.000</text><text class="r" x="60" y="157">1.000</text><text class="r" x="60" y="167">1.000</text>
</g>
<!-- Value top -->
<g class="n" transform="translate(545,762)">
<rect x="1" y="1" width="70" height="40" rx="3" fill="#111" opacity=".6"/><rect width="69" height="39" rx="3" fill="#303030"/><path d="M0,9V3a3,3 0 0 1 3,-3H66a3,3 0 0 1 3,3V9Z" fill="#8f2a4c"/>
<text x="12" y="4.5">Value</text><text class="r" x="64" y="17">Value</text><circle cx="70" cy="17" r="2" fill="#a0a0a0"/><rect x="5" y="27" width="59" height="9" rx="2" fill="#4a4a4a"/><text class="m" x="34" y="32">0.080</text>
</g>
<!-- Snap top -->
<g class="n" transform="translate(675,680)">
<rect x="1" y="1" width="70" height="66" rx="3" fill="#111" opacity=".6"/><rect width="69" height="65" rx="3" fill="#303030"/><path d="M0,10V3a3,3 0 0 1 3,-3H66a3,3 0 0 1 3,3V10Z" fill="#3c3c86"/>
<text x="12" y="5">Snap</text><text class="r" x="64" y="17">Vector</text><circle cx="70" cy="17" r="2" fill="#5a5ac8"/>
<rect x="5" y="28" width="59" height="10" rx="2" fill="#282828"/><text x="9" y="33">Snap</text>
<circle cx="0" cy="46" r="2" fill="#5a5ac8"/><text x="6" y="46">Vector</text><circle cx="0" cy="57" r="2" fill="#5a5ac8"/><text x="6" y="57">Increment</text>
</g>
<!-- Noise top selected -->
<g class="n" transform="translate(781,707)">
<rect width="69" height="107" rx="3" fill="#303030"/><path d="M0,10V3a3,3 0 0 1 3,-3H66a3,3 0 0 1 3,3V10Z" fill="#7c4a1f"/>
<rect width="69" height="107" rx="3" fill="none" stroke="#f0f0f0" stroke-width="1.2"/>
<text x="13" y="5">Noise Texture</text><text class="r" x="64" y="17">Fac</text><text class="r" x="64" y="28">Color</text><circle cx="70" cy="17" r="2" fill="#a0a0a0"/><circle cx="70" cy="28" r="2" fill="#c7c729"/>
<rect x="6" y="39" width="58" height="9" rx="2" fill="#282828"/><text x="9" y="43">3D</text>
<circle cy="56" r="2" fill="#5a5ac8"/><text x="6" y="56">Vector</text>
<rect x="6" y="63" width="58" height="9" rx="2" fill="#4a4a4a"/><rect x="6" y="74" width="58" height="9" rx="2" fill="#4a4a4a"/><rect x="6" y="85" width="58" height="9" rx="2" fill="#4a4a4a"/><rect x="6" y="96" width="58" height="9" rx="2" fill="#4a4a4a"/><rect x="6" y="85" width="28" height="9" rx="2" fill="#4772b3"/>
<text x="13" y="67">Scale</text><text class="r" x="58" y="67">4.000</text><text x="13" y="78">Detail</text><text class="r" x="58" y="78">2.300</text><text x="13" y="89">Roughness</text><text class="r" x="58" y="89">0.500</text><text x="13" y="100">Distortion</text><text class="r" x="58" y="100">0.000</text>
<g fill="#a0a0a0"><circle cy="67" r="2"/><circle cy="78" r="2"/><circle cy="89" r="2"/><circle cy="100" r="2"/></g>
</g>

<!-- TexCoord 2 -->
<g class="n" transform="translate(466,843)">
<rect x="1" y="1" width="70" height="118" rx="3" fill="#111" opacity=".6"/><rect width="69" height="117" rx="3" fill="#303030"/><path d="M0,10V3a3,3 0 0 1 3,-3H66a3,3 0 0 1 3,3V10Z" fill="#8f2a4c"/>
<text x="12" y="5">Texture Coordinate</text>
<text class="r" x="64" y="17">Generated</text><text class="r" x="64" y="28">Normal</text><text class="r" x="64" y="39">UV</text><text class="r" x="64" y="50">Object</text><text class="r" x="64" y="61">Camera</text><text class="r" x="64" y="72">Window</text><text class="r" x="64" y="83">Reflection</text>
<g fill="#5a5ac8"><circle cx="70" cy="17" r="2"/><circle cx="70" cy="28" r="2"/><circle cx="70" cy="39" r="2"/><circle cx="70" cy="50" r="2"/><circle cx="70" cy="61" r="2"/><circle cx="70" cy="72" r="2"/><circle cx="70" cy="83" r="2"/></g>
<text x="6" y="98">Object:</text><rect x="27" y="94" width="37" height="8" rx="2" fill="#1d1d1d"/><rect x="29" y="95.5" width="5" height="5" fill="#eee"/><rect x="5" y="107" width="6" height="6" rx="1" fill="#555"/><text x="14" y="110">From Instancer</text>
</g>
<!-- Mapping 2 -->
<g class="n" transform="translate(556,843)">
<rect x="1" y="1" width="70" height="176" rx="3" fill="#111" opacity=".6"/><rect width="69" height="175" rx="3" fill="#303030"/><path d="M0,10V3a3,3 0 0 1 3,-3H66a3,3 0 0 1 3,3V10Z" fill="#3c3c86"/>
<text x="12" y="5">Mapping</text><text class="r" x="64" y="17">Vector</text><circle cx="70" cy="17" r="2" fill="#5a5ac8"/>
<text x="6" y="32">Type:</text><rect x="25" y="28" width="39" height="9" rx="2" fill="#282828"/><text x="28" y="32">Point</text>
<circle cx="0" cy="45" r="2" fill="#5a5ac8"/><text x="6" y="45">Vector</text><circle cx="0" cy="56" r="2" fill="#5a5ac8"/><text x="6" y="56">Location:</text>
<rect x="6" y="62" width="58" height="28" rx="2" fill="#4a4a4a"/><text x="14" y="66">X</text><text x="14" y="75">Y</text><text x="14" y="85">Z</text><text class="r" x="60" y="66">0 m</text><text class="r" x="60" y="75">0 m</text><text class="r" x="60" y="85">0 m</text>
<circle cx="0" cy="96" r="2" fill="#5a5ac8"/><text x="6" y="96">Rotation:</text>
<rect x="6" y="102" width="58" height="28" rx="2" fill="#4a4a4a"/><text x="14" y="106">X</text><text x="14" y="115">Y</text><text x="14" y="125">Z</text><text class="r" x="60" y="106">0°</text><text class="r" x="60" y="115">0°</text><text class="r" x="60" y="125">0°</text>
<circle cx="0" cy="137" r="2" fill="#5a5ac8"/><text x="6" y="137">Scale:</text>
<rect x="6" y="143" width="58" height="28" rx="2" fill="#4a4a4a"/><text x="14" y="147">X</text><text x="14" y="156">Y</text><text x="14" y="166">Z</text><text class="r" x="60" y="147">1.000</text><text class="r" x="60" y="156">1.000</text><text class="r" x="60" y="166">1.000</text>
</g>
<!-- Value 2 -->
<g class="n" transform="translate(632,976)">
<rect x="1" y="1" width="70" height="40" rx="3" fill="#111" opacity=".6"/><rect width="69" height="39" rx="3" fill="#303030"/><path d="M0,10V3a3,3 0 0 1 3,-3H66a3,3 0 0 1 3,3V10Z" fill="#8f2a4c"/>
<text x="12" y="5">Value</text><text class="r" x="64" y="17">Value</text><circle cx="70" cy="17" r="2" fill="#a0a0a0"/><rect x="5" y="27" width="59" height="9" rx="2" fill="#4a4a4a"/><text class="m" x="34" y="32">0.080</text>
</g>
<!-- Snap 2 -->
<g class="n" transform="translate(690,873)">
<rect x="1" y="1" width="70" height="65" rx="3" fill="#111" opacity=".6"/><rect width="69" height="64" rx="3" fill="#303030"/><path d="M0,9V3a3,3 0 0 1 3,-3H66a3,3 0 0 1 3,3V9Z" fill="#3c3c86"/>
<text x="12" y="4.5">Snap</text><text class="r" x="64" y="17">Vector</text><circle cx="70" cy="17" r="2" fill="#5a5ac8"/>
<rect x="5" y="28" width="59" height="10" rx="2" fill="#282828"/><text x="9" y="33">Snap</text>
<circle cx="0" cy="45" r="2" fill="#5a5ac8"/><text x="6" y="45">Vector</text><circle cx="0" cy="56" r="2" fill="#5a5ac8"/><text x="6" y="56">Increment</text>
</g>
<!-- Noise 2 -->
<g class="n" transform="translate(830,843)">
<rect x="1" y="1" width="70" height="107" rx="3" fill="#111" opacity=".6"/><rect width="69" height="106" rx="3" fill="#303030"/><path d="M0,10V3a3,3 0 0 1 3,-3H66a3,3 0 0 1 3,3V10Z" fill="#7c4a1f"/>
<text x="13" y="5">Noise Texture</text><text class="r" x="64" y="17">Fac</text><text class="r" x="64" y="28">Color</text><circle cx="70" cy="17" r="2" fill="#a0a0a0"/><circle cx="70" cy="28" r="2" fill="#c7c729"/>
<rect x="6" y="39" width="58" height="9" rx="2" fill="#282828"/><text x="9" y="43">3D</text>
<circle cy="56" r="2" fill="#5a5ac8"/><text x="6" y="56">Vector</text>
<rect x="6" y="63" width="58" height="9" rx="2" fill="#4a4a4a"/><rect x="6" y="74" width="58" height="9" rx="2" fill="#4a4a4a"/><rect x="6" y="85" width="58" height="9" rx="2" fill="#4a4a4a"/><rect x="6" y="95" width="58" height="9" rx="2" fill="#4a4a4a"/><rect x="6" y="85" width="28" height="9" rx="2" fill="#4772b3"/>
<text x="13" y="67">Scale</text><text class="r" x="58" y="67">3.900</text><text x="13" y="78">Detail</text><text class="r" x="58" y="78">1.300</text><text x="13" y="89">Roughness</text><text class="r" x="58" y="89">0.500</text><text x="13" y="99">Distortion</text><text class="r" x="58" y="99">0.200</text>
<g fill="#a0a0a0"><circle cy="67" r="2"/><circle cy="78" r="2"/><circle cy="89" r="2"/><circle cy="99" r="2"/></g>
</g>

<!-- ColorRamp 1 -->
<g class="n" transform="translate(883,685)">
<rect x="1" y="1" width="120" height="106" rx="3" fill="#111" opacity=".6"/><rect width="119" height="105" rx="3" fill="#303030"/><path d="M0,9V3a3,3 0 0 1 3,-3H116a3,3 0 0 1 3,3V9Z" fill="#1f6a8e"/>
<text x="13" y="4.5">ColorRamp</text><text class="r" x="114" y="17">Color</text><text class="r" x="114" y="28">Alpha</text><circle cx="120" cy="17" r="2" fill="#c7c729"/><circle cx="120" cy="28" r="2" fill="#a0a0a0"/>
<path d="M7,45H13M10,42V48M19,45H25" stroke="#bbb"/><rect x="52" y="40" width="30" height="10" rx="2" fill="#282828"/><rect x="83" y="40" width="32" height="10" rx="2" fill="#282828"/><text x="55" y="45">RGB</text><text x="86" y="45">Constant</text>
<rect x="11" y="52" width="99" height="11" fill="#000"/><rect x="58" y="52" width="51" height="10" fill="#808080"/><rect x="57" y="52" width="1" height="10" fill="#fff"/><rect x="11" y="53" width="1" height="8" fill="#fff" opacity=".8"/>
<rect x="6" y="69" width="29" height="8" rx="2" fill="#4a4a4a"/><text class="m" x="20" y="73">1</text><rect x="40" y="69" width="75" height="8" rx="2" fill="#4a4a4a"/><text x="47" y="73">Pos</text><text class="r" x="107" y="73">0.586</text>
<rect x="6" y="79" width="109" height="9" rx="2" fill="#808080"/>
<circle cy="98" r="2" fill="#a0a0a0"/><text x="6" y="98">Fac</text>
</g>
<!-- ColorRamp 2 -->
<g class="n" transform="translate(948,823)">
<rect x="1" y="1" width="120" height="106" rx="3" fill="#111" opacity=".6"/><rect width="119" height="105" rx="3" fill="#303030"/><path d="M0,9V3a3,3 0 0 1 3,-3H116a3,3 0 0 1 3,3V9Z" fill="#1f6a8e"/>
<text x="13" y="4.5">ColorRamp</text><text class="r" x="114" y="17">Color</text><text class="r" x="114" y="28">Alpha</text><circle cx="120" cy="17" r="2" fill="#c7c729"/><circle cx="120" cy="28" r="2" fill="#a0a0a0"/>
<path d="M7,46H13M10,43V49M19,46H25" stroke="#bbb"/><rect x="52" y="41" width="30" height="10" rx="2" fill="#282828"/><rect x="83" y="41" width="32" height="10" rx="2" fill="#282828"/><text x="55" y="46">RGB</text><text x="86" y="46">Constant</text>
<rect x="11" y="53" width="99" height="11" fill="#000"/><rect x="11" y="54" width="41" height="9" fill="#181818"/><rect x="53" y="54" width="56" height="9" fill="#3c3c3c"/><rect x="52" y="53" width="1" height="10" fill="#fff"/><rect x="11" y="54" width="1" height="8" fill="#fff" opacity=".8"/>
<rect x="6" y="69" width="29" height="8" rx="2" fill="#4a4a4a"/><text class="m" x="20" y="73">1</text><rect x="40" y="69" width="75" height="8" rx="2" fill="#4a4a4a"/><text x="47" y="73">Pos</text><text class="r" x="107" y="73">0.436</text>
<rect x="6" y="79" width="109" height="9" rx="2" fill="#3c3c3c"/>
<circle cy="98" r="2" fill="#a0a0a0"/><text x="6" y="98">Fac</text>
</g>
<!-- Mix -->
<g class="n" transform="translate(1029,680)">
<rect x="1" y="1" width="70" height="111" rx="3" fill="#111" opacity=".6"/><rect width="69" height="110" rx="3" fill="#303030"/><path d="M0,9V3a3,3 0 0 1 3,-3H66a3,3 0 0 1 3,3V9Z" fill="#6c6c1e"/>
<text x="13" y="4.5">Mix</text><text class="r" x="62" y="17">Result</text><circle cx="70" cy="17" r="2" fill="#c7c729"/>
<rect x="5" y="28" width="59" height="9" rx="2" fill="#282828"/><text x="8" y="32">Color</text><rect x="5" y="40" width="59" height="9" rx="2" fill="#282828"/><text x="8" y="44">Mix</text>
<rect x="5" y="54" width="6" height="6" rx="1" fill="#4772b3"/><path d="M6,57L8,59L10,55" fill="none" stroke="#fff" stroke-width=".8"/><text x="13" y="57">Clamp Result</text><rect x="5" y="66" width="6" height="6" rx="1" fill="#4772b3"/><path d="M6,69L8,71L10,67" fill="none" stroke="#fff" stroke-width=".8"/><text x="13" y="69">Clamp Factor</text>
<rect x="5" y="78" width="59" height="9" rx="2" fill="#4a4a4a"/><rect x="5" y="78" width="28" height="9" rx="2" fill="#4772b3"/><text x="12" y="82">Factor</text><text class="r" x="56" y="82">0.500</text>
<circle cy="82" r="2" fill="#a0a0a0"/><circle cy="93" r="2" fill="#c7c729"/><circle cy="104" r="2" fill="#c7c729"/><text x="7" y="93">A</text><text x="7" y="104">B</text>
</g>
<!-- BSDF -->
<g class="n" transform="translate(1137,681)">
<rect x="1" y="1" width="120" height="340" rx="3" fill="#111" opacity=".6"/><rect width="119" height="338" rx="3" fill="#303030"/><path d="M0,10V3a3,3 0 0 1 3,-3H116a3,3 0 0 1 3,3V10Z" fill="#2f6e2f"/>
<text x="13" y="5">Principled BSDF</text><text class="r" x="112" y="17">BSDF</text><circle cx="120" cy="17" r="2" fill="#4fc24f"/>
<rect x="5" y="28" width="108" height="9" rx="2" fill="#282828"/><text x="8" y="32">GGX</text><rect x="5" y="41" width="108" height="9" rx="2" fill="#282828"/><text x="8" y="45">Random Walk</text>
<text x="5" y="57">Base Color</text>
<g fill="#4a4a4a"><rect x="5" y="64" width="108" height="9" rx="2"/><rect x="5" y="97" width="108" height="9" rx="2"/><rect x="5" y="108" width="108" height="9" rx="2"/><rect x="5" y="119" width="108" height="9" rx="2"/><rect x="5" y="130" width="108" height="9" rx="2"/><rect x="5" y="141" width="108" height="9" rx="2"/><rect x="5" y="152" width="108" height="9" rx="2"/><rect x="5" y="163" width="108" height="9" rx="2"/><rect x="5" y="174" width="108" height="9" rx="2"/><rect x="5" y="185" width="108" height="9" rx="2"/><rect x="5" y="196" width="108" height="9" rx="2"/><rect x="5" y="207" width="108" height="9" rx="2"/><rect x="5" y="218" width="108" height="9" rx="2"/><rect x="5" y="229" width="108" height="9" rx="2"/><rect x="5" y="240" width="108" height="9" rx="2"/><rect x="5" y="251" width="108" height="9" rx="2"/><rect x="5" y="273" width="108" height="9" rx="2"/><rect x="5" y="284" width="108" height="9" rx="2"/></g>
<rect x="5" y="75" width="108" height="9" rx="2" fill="#282828"/>
<rect x="51" y="86" width="62" height="9" fill="#eee"/><rect x="51" y="262" width="62" height="9" fill="#000"/>
<rect x="5" y="97" width="10" height="9" rx="2" fill="#4772b3"/><rect x="5" y="130" width="53" height="9" rx="2" fill="#4772b3"/><rect x="5" y="152" width="53" height="9" rx="2" fill="#4772b3"/><rect x="5" y="196" width="53" height="9" rx="2" fill="#4772b3"/><rect x="5" y="218" width="1.5" height="9" fill="#4772b3"/><rect x="5" y="284" width="108" height="9" rx="2" fill="#4772b3"/>
<text x="12" y="68">Subsurface</text><text class="r" x="106" y="68">0.000</text>
<text x="8" y="79">Subsurface Radius</text>
<text x="5" y="90">Subsurface Color</text>
<text x="12" y="101">Subsurface IOR</text><text class="r" x="106" y="101">1.400</text>
<text x="12" y="112">Subsurface Anisotropy</text><text class="r" x="106" y="112">0.000</text>
<text x="12" y="123">Metallic</text><text class="r" x="106" y="123">0.000</text>
<text x="12" y="134">Specular</text><text class="r" x="106" y="134">0.500</text>
<text x="12" y="145">Specular Tint</text><text class="r" x="106" y="145">0.000</text>
<text x="12" y="156">Roughness</text><text class="r" x="106" y="156">0.500</text>
<text x="12" y="167">Anisotropic</text><text class="r" x="106" y="167">0.000</text>
<text x="12" y="178">Anisotropic Rotation</text><text class="r" x="106" y="178">0.000</text>
<text x="12" y="189">Sheen</text><text class="r" x="106" y="189">0.000</text>
<text x="12" y="200">Sheen Tint</text><text class="r" x="106" y="200">0.500</text>
<text x="12" y="211">Clearcoat</text><text class="r" x="106" y="211">0.000</text>
<text x="12" y="222">Clearcoat Roughness</text><text class="r" x="106" y="222">0.030</text>
<text x="12" y="233">IOR</text><text class="r" x="106" y="233">1.450</text>
<text x="12" y="244">Transmission</text><text class="r" x="106" y="244">0.000</text>
<text x="12" y="255">Transmission Roughness</text><text class="r" x="106" y="255">0.000</text>
<text x="5" y="266">Emission</text>
<text x="12" y="277">Emission Strength</text><text class="r" x="106" y="277">1.000</text>
<text x="12" y="288">Alpha</text><text class="r" x="106" y="288">1.000</text>
<text x="5" y="299">Normal</text><text x="5" y="310">Clearcoat Normal</text><text x="5" y="321">Tangent</text>
<g fill="#a0a0a0"><circle cy="68" r="2"/><circle cy="101" r="2"/><circle cy="112" r="2"/><circle cy="123" r="2"/><circle cy="134" r="2"/><circle cy="145" r="2"/><circle cy="156" r="2"/><circle cy="167" r="2"/><circle cy="178" r="2"/><circle cy="189" r="2"/><circle cy="200" r="2"/><circle cy="211" r="2"/><circle cy="222" r="2"/><circle cy="233" r="2"/><circle cy="244" r="2"/><circle cy="255" r="2"/><circle cy="277" r="2"/><circle cy="288" r="2"/></g>
<g fill="#c7c729"><circle cy="57" r="2"/><circle cy="90" r="2"/><circle cy="266" r="2"/></g>
<g fill="#5a5ac8"><circle cy="79" r="2"/><circle cy="299" r="2"/><circle cy="310" r="2"/><circle cy="321" r="2"/></g>
</g>
<!-- Output -->
<g class="n" transform="translate(1297,724)">
<rect x="1" y="1" width="70" height="60" rx="3" fill="#111" opacity=".6"/><rect width="69" height="59" rx="3" fill="#303030"/><path d="M0,9V3a3,3 0 0 1 3,-3H66a3,3 0 0 1 3,3V9Z" fill="#4c1c30"/>
<text x="13" y="4.5">Material Output</text><rect x="6" y="13" width="58" height="8" rx="2" fill="#282828"/><text x="11" y="17">All</text>
<circle cy="29" r="2" fill="#4fc24f"/><circle cy="40" r="2" fill="#a0a0a0"/><circle cy="51" r="2" fill="#5a5ac8"/><text x="6" y="29">Surface</text><text x="6" y="40">Volume</text><text x="6" y="51">Displacement</text>
</g>
</g>

<!-- breadcrumb -->
<use href="#cr" x="128" y="588"/>
<rect x="144" y="581" width="14" height="15" fill="none" stroke="#ccc" stroke-dasharray="3 8"/><rect x="147" y="584" width="8" height="9" fill="#e8e8e8"/>
<text x="167" y="588">XFG.029_XFG_mesh.001</text>
<path d="M310,583L315,588L310,593" fill="none" stroke="#ccc" stroke-width="1.2"/>
<g transform="translate(333,588)"><path d="M-5,-5H5L1.5,6H-1.5Z" fill="none" stroke="#ddd"/><rect x="-7" y="-7" width="3" height="3" fill="#1c1c1c" stroke="#ddd"/><rect x="4" y="-7" width="3" height="3" fill="#1c1c1c" stroke="#ddd"/><rect x="-1.5" y="5" width="3" height="3" fill="#1c1c1c" stroke="#ddd"/></g>
<text x="349" y="588">XFG.029_XFG_mesh.001</text>
<path d="M493,583L498,588L493,593" fill="none" stroke="#ccc" stroke-width="1.2"/>
<circle cx="515" cy="588" r="7" fill="#e4e4e4"/><path d="M515,581a7,7 0 0 1 7,7h-7zM508,588a7,7 0 0 0 7,7v-7z" fill="#333"/>
<text x="531" y="588" style="font-size:12.5px;fill:#e0e0e0">Material</text>

<rect x="135" y="1010" width="1310" height="3" rx="1.5" fill="#333"/>
<path d="M1575,585V600" stroke="#333" stroke-width="3"/>

<!-- bottom strip -->
<rect x="0" y="1015" width="1920" height="5" fill="#2b1b28"/><rect x="0" y="1015" width="48" height="5" fill="#1a2236"/><rect x="48" y="1016" width="287" height="4" fill="#1c1c24" stroke="#777" stroke-width="1"/>
<rect x="876" y="1016" width="48" height="4" fill="#7a5c5c"/><rect x="1490" y="1016" width="70" height="4" fill="#8a4a20"/>
</svg>
</body></html>
